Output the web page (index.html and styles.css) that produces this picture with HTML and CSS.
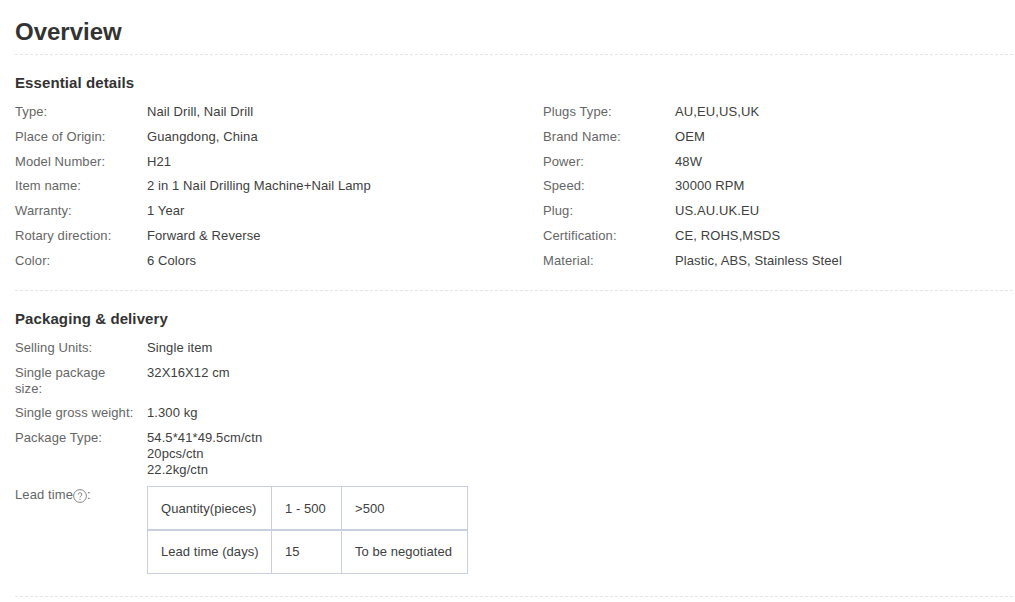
FILE: index.html
```html
<!DOCTYPE html>
<html lang="en">
<head>
<meta charset="utf-8">
<title>Overview</title>
<link rel="stylesheet" href="styles.css">
</head>
<body>
<main class="page">
  <h1 class="title">Overview</h1>
  <section class="section">
    <h2 class="heading">Essential details</h2>
    <div class="columns">
      <dl class="attrs">
        <div class="row"><dt>Type:</dt><dd>Nail Drill, Nail Drill</dd></div>
        <div class="row"><dt>Place of Origin:</dt><dd>Guangdong, China</dd></div>
        <div class="row"><dt>Model Number:</dt><dd>H21</dd></div>
        <div class="row"><dt>Item name:</dt><dd>2 in 1 Nail Drilling Machine+Nail Lamp</dd></div>
        <div class="row"><dt>Warranty:</dt><dd>1 Year</dd></div>
        <div class="row"><dt>Rotary direction:</dt><dd>Forward &amp; Reverse</dd></div>
        <div class="row"><dt>Color:</dt><dd>6 Colors</dd></div>
      </dl>
      <dl class="attrs">
        <div class="row"><dt>Plugs Type:</dt><dd>AU,EU,US,UK</dd></div>
        <div class="row"><dt>Brand Name:</dt><dd>OEM</dd></div>
        <div class="row"><dt>Power:</dt><dd>48W</dd></div>
        <div class="row"><dt>Speed:</dt><dd>30000 RPM</dd></div>
        <div class="row"><dt>Plug:</dt><dd>US.AU.UK.EU</dd></div>
        <div class="row"><dt>Certification:</dt><dd>CE, ROHS,MSDS</dd></div>
        <div class="row"><dt>Material:</dt><dd>Plastic, ABS, Stainless Steel</dd></div>
      </dl>
    </div>
  </section>
  <section class="section">
    <h2 class="heading">Packaging &amp; delivery</h2>
    <dl class="attrs">
      <div class="row"><dt>Selling Units:</dt><dd>Single item</dd></div>
      <div class="row"><dt>Single package size:</dt><dd>32X16X12 cm</dd></div>
      <div class="row"><dt>Single gross weight:</dt><dd>1.300 kg</dd></div>
      <div class="row"><dt>Package Type:</dt><dd>54.5*41*49.5cm/ctn<br>20pcs/ctn<br>22.2kg/ctn</dd></div>
      <div class="row"><dt>Lead time<svg class="help" viewBox="0 0 14 14" aria-hidden="true"><circle cx="7" cy="7" r="6.4"/><path d="M5.2 5.6a1.8 1.8 0 1 1 2.7 1.5c-.6.4-.9.7-.9 1.4"/><circle class="dot" cx="7" cy="10.4" r=".6"/></svg>:</dt><dd>
        <table class="lead">
          <colgroup><col class="col-a"><col class="col-b"><col class="col-c"></colgroup>
          <tr><td>Quantity(pieces)</td><td>1 - 500</td><td>&gt;500</td></tr>
          <tr><td>Lead time (days)</td><td>15</td><td>To be negotiated</td></tr>
        </table>
      </dd></div>
    </dl>
  </section>
</main>
</body>
</html>
```
FILE: styles.css
```css
* { box-sizing: border-box; }
html, body { margin: 0; background: #fff; }
body {
  font-family: "Liberation Sans", Arial, sans-serif;
  font-size: 13px;
  line-height: 16px;
  letter-spacing: .1px;
  color: #404040;
  overflow: hidden;
}
.page { padding: 0 2px 0 15px; height: 602px; }
.title {
  margin: 0;
  height: 55px;
  padding-top: 18px;
  font-size: 24px;
  line-height: 28px;
  font-weight: 700;
  letter-spacing: 0;
  color: #333;
  border-bottom: 1px dashed #e6e6e6;
}
.section {
  padding: 19px 0 12px;
  border-bottom: 1px dashed #e6e6e6;
}
.heading {
  margin: 0 0 12px;
  font-size: 15px;
  line-height: 18px;
  font-weight: 700;
  color: #333;
}
.columns { display: grid; grid-template-columns: 528px 1fr; }
.attrs { margin: 0; }
.row { display: flex; padding-bottom: 8.83px; }
.row dt { width: 132px; flex: none; padding-right: 13px; color: #666; line-height: 15.9px; }
.row dd { margin: 0; }
.help {
  width: 14px; height: 14px;
  vertical-align: -4px;
  margin-top: -2px;
  fill: none;
  stroke: #777;
  stroke-width: .9;
}
.help .dot { fill: #777; stroke: none; }
.lead {
  border-collapse: collapse;
  table-layout: fixed;
  width: 320px;
  margin: -1px 0 1px;
  white-space: nowrap;
  letter-spacing: .05px;
}
.col-a { width: 124px; }
.col-b { width: 70px; }
.col-c { width: 126px; }
.lead td {
  border: 1px solid #c8d0e0;
  height: 44px;
  padding: 2px 13px 0;
}
.lead tr + tr td { height: 43px; padding-top: 0; border-top-width: 2px; }
```
